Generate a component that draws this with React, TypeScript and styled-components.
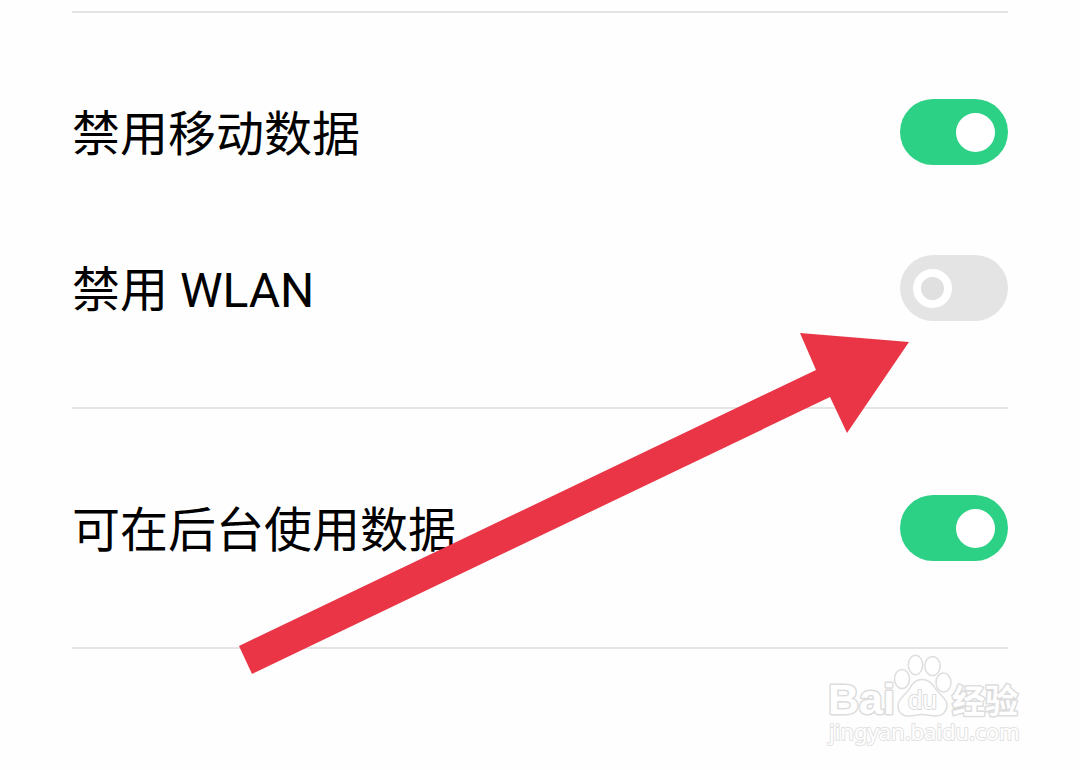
import React, { useState } from 'react';
import styled, { createGlobalStyle } from 'styled-components';

const GlobalStyle = createGlobalStyle`
  body {
    margin: 0;
    background: #fefefe;
    color: #000;
    font-family: Roboto, 'Noto Sans CJK SC', sans-serif;
  }
`;

const Screen = styled.main`
  position: relative;
  min-height: 100vh;
  box-sizing: border-box;
  padding: 11px 72px 0;
  overflow: hidden;
`;

const Section = styled.section`
  border-top: 2px solid #e4e4e4;
  padding: 41px 0;

  &:last-of-type {
    border-bottom: 2px solid #e4e4e4;
  }
`;

const Row = styled.label`
  display: flex;
  align-items: center;
  justify-content: space-between;
  height: 156px;
`;

const Title = styled.span`
  padding-top: 6px;
  font-size: 48px;
  line-height: 72px;
`;

const Toggle = styled.input`
  appearance: none;
  display: flex;
  align-items: center;
  justify-content: flex-start;
  box-sizing: border-box;
  flex: none;
  width: 108px;
  height: 66px;
  margin: 0;
  padding: 0 13px;
  border-radius: 33px;
  background: #e4e4e4;
  cursor: pointer;

  &::before {
    content: '';
    box-sizing: border-box;
    width: 39px;
    height: 39px;
    border: 8px solid #fff;
    border-radius: 50%;
    background: #e0e0e0;
  }

  &:checked {
    justify-content: flex-end;
    background: #2cd185;
  }

  &:checked::before {
    background: #fff;
  }
`;

const Pointer = styled.svg`
  position: absolute;
  top: 333px;
  right: 171px;
  width: 670px;
  height: 341px;
  pointer-events: none;
`;

const Watermark = styled.svg`
  position: absolute;
  top: 650px;
  right: 50px;
  width: 210px;
  height: 104px;
  pointer-events: none;
`;

type SettingProps = { title: string; initial: boolean };

function Setting({ title, initial }: SettingProps) {
  const [on, setOn] = useState(initial);
  return (
    <Row>
      <Title>{title}</Title>
      <Toggle type="checkbox" checked={on} onChange={(e) => setOn(e.target.checked)} />
    </Row>
  );
}

export default function App() {
  return (
    <Screen>
      <GlobalStyle />
      <Section>
        <Setting title="禁用移动数据" initial />
        <Setting title="禁用 WLAN" initial={false} />
      </Section>
      <Section>
        <Setting title="可在后台使用数据" initial />
      </Section>
      <Pointer viewBox="0 0 670 341" aria-hidden="true">
        <path d="M0 313 L577 37 L561 0 L670 9 L608 100 L591 64 L13 341 Z" fill="#e93546" />
      </Pointer>
      <Watermark viewBox="0 0 210 104">
        <g fill="#fff" stroke="#dcdcdc" strokeWidth="3" strokeLinejoin="round" paintOrder="stroke">
          <text x="8" y="64" fontFamily="Liberation Sans, sans-serif" fontWeight="700" fontSize="43">Bai</text>
          <g strokeWidth="1.5" stroke="#dedede" paintOrder="normal">
            <ellipse cx="82" cy="29" rx="7.5" ry="9.5" />
            <ellipse cx="95.500" cy="15" rx="7.200" ry="9.700" />
            <ellipse cx="112.500" cy="16" rx="7.700" ry="9.500" />
            <ellipse cx="123.500" cy="32.500" rx="7.500" ry="9.500" />
            <path d="M102 29.500 C96 29.500 92.500 33 90 38 C86 45 78 48 78 56 C78 62 82 66 88 66 C94 66 97 64.500 102 64.500 C107 64.500 110 66 116 66 C123 66 127 61 127 55 C127 48 119 45 115 38 C112 33 108 29.500 102 29.500 Z" />
          </g>
          <text x="88" y="59" fontFamily="Liberation Sans, sans-serif" fontWeight="400" fontSize="26" strokeWidth="2">du</text>
          <text x="132" y="63" fontFamily="Noto Sans CJK SC, sans-serif" fontWeight="700" fontSize="33">经验</text>
          <text x="9" y="90" fontFamily="Noto Sans, sans-serif" fontWeight="400" fontSize="22" stroke="#e2e2e2" strokeWidth="2">jingyan.baidu.com</text>
        </g>
      </Watermark>
    </Screen>
  );
}
